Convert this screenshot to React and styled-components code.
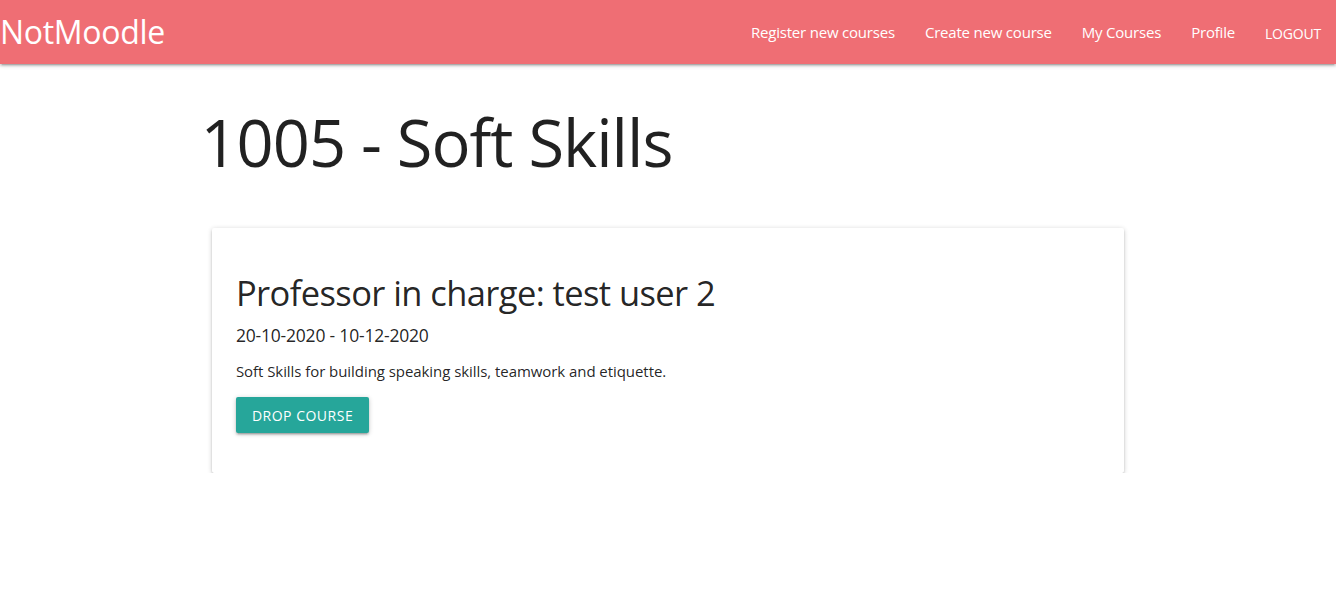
import React from "react";
import styled, { createGlobalStyle } from "styled-components";

const GlobalStyle = createGlobalStyle`
  * { box-sizing: border-box; }
  body {
    margin: 0;
    background: #fff;
    font-family: "Open Sans", "Noto Sans", sans-serif;
    color: rgba(0, 0, 0, 0.87);
  }
`;

const shadow = `0 2px 2px 0 rgba(0, 0, 0, 0.14), 0 3px 1px -2px rgba(0, 0, 0, 0.12),
  0 1px 5px 0 rgba(0, 0, 0, 0.2)`;

const Nav = styled.nav`
  height: 64px;
  background: #ef6e74;
  display: flex;
  align-items: center;
  justify-content: space-between;
  box-shadow: ${shadow};
`;

const Brand = styled.a`
  color: #fff;
  font-size: 32px;
  letter-spacing: -0.3px;
  line-height: 64px;
  margin-top: -1px;
`;

const Links = styled.ul`
  display: flex;
  list-style: none;
  margin: 0;
  padding: 0 15px 0 0;
  height: 64px;
  align-items: center;
`;

const Link = styled.li`
  color: #fff;
  font-size: ${p => (p.upper ? "14px" : "15px")};
  letter-spacing: -0.2px;
  text-transform: ${p => (p.upper ? "uppercase" : "none")};
  margin-left: ${p => (p.first ? "0" : "30px")};
  margin-top: ${p => (p.upper ? "2px" : "0")};
`;

const Container = styled.main`
  width: 70%;
  margin: 0 auto;
`;

const Title = styled.h1`
  font-size: 65px;
  font-weight: 400;
  letter-spacing: -1px;
  line-height: 70px;
  margin: 43px 0 51px 0;
`;

const Card = styled.section`
  margin: 0 11.5px;
  background: #fff;
  padding: 24px;
  box-shadow: ${shadow};
  border-radius: 2px;
  height: 245px;
`;

const CardTitle = styled.h4`
  font-size: 34.5px;
  font-weight: 400;
  letter-spacing: -0.6px;
  line-height: 40px;
  margin: 21px 0 11px;
`;

const Dates = styled.h6`
  font-size: 17.5px;
  font-weight: 400;
  letter-spacing: -0.2px;
  line-height: 22px;
  margin: 0 0 14px;
`;

const Description = styled.p`
  font-size: 15px;
  letter-spacing: -0.06px;
  line-height: 22px;
  margin: 0 0 15px;
`;

const Button = styled.button`
  height: 36px;
  padding: 0 16px;
  border: none;
  border-radius: 2px;
  background: #26a69a;
  color: #fff;
  font-family: inherit;
  font-size: 14px;
  letter-spacing: 0.5px;
  text-transform: uppercase;
  box-shadow: ${shadow};
`;

const links = ["Register new courses", "Create new course", "My Courses", "Profile"];

export default function App() {
  return (
    <>
      <GlobalStyle />
      <Nav>
        <Brand>NotMoodle</Brand>
        <Links>
          {links.map((l, i) => (
            <Link key={l} first={i === 0}>
              {l}
            </Link>
          ))}
          <Link upper>Logout</Link>
        </Links>
      </Nav>
      <Container>
        <Title>1005 - Soft Skills</Title>
        <Card>
          <CardTitle>Professor in charge: test user 2</CardTitle>
          <Dates>20-10-2020 - 10-12-2020</Dates>
          <Description>Soft Skills for building speaking skills, teamwork and etiquette.</Description>
          <Button>Drop course</Button>
        </Card>
      </Container>
    </>
  );
}
